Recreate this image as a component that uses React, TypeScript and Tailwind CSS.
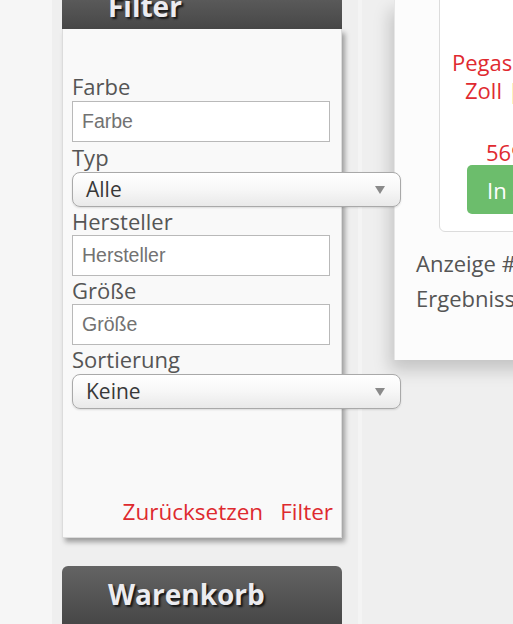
import React from "react";

const sans = { fontFamily: '"Open Sans", "Liberation Sans", sans-serif' };
const arial = { fontFamily: '"Liberation Sans", Arial, sans-serif' };

function Label({ children, h }: { children: React.ReactNode; h: string }) {
  return (
    <div className={`${h} flex items-center text-[22px] leading-[28px] text-[#555]`} style={sans}>
      {children}
    </div>
  );
}

function TextField({ placeholder }: { placeholder: string }) {
  return (
    <input
      type="text"
      placeholder={placeholder}
      className="block h-[41px] w-[258px] border border-[#b9b9b9] bg-white px-[9px] text-[19.5px] text-[#333] placeholder:text-[#727272] outline-none"
      style={arial}
    />
  );
}

function SelectBox({ value }: { value: string }) {
  return (
    <div
      className="relative flex h-[35px] w-[329px] items-center rounded-[8px] border border-[#a9a9a9] bg-gradient-to-b from-white via-[#f7f7f7] to-[#e9e9e9] pl-[13px] text-[21px] text-[#383838] shadow-[0_1px_2px_rgba(0,0,0,0.12)]"
      style={sans}
    >
      <span>{value}</span>
      <svg
        className="absolute right-[15px] top-[13px]"
        width="10"
        height="8"
        viewBox="0 0 10 8"
      >
        <path d="M0 0 H10 L5 8 Z" fill="#8a8a8a" />
      </svg>
    </div>
  );
}

function BoxHeader({ title, className }: { title: string; className: string }) {
  return (
    <div
      className={`flex items-center bg-gradient-to-b from-[#646464] to-[#474747] pl-[46px] text-[28px] font-bold text-[#ececf0] [text-shadow:2px_2px_2px_#151515] ${className}`}
      style={sans}
    >
      {title}
    </div>
  );
}

export default function App() {
  return (
    <div className="flex h-[624px] w-[513px] overflow-hidden bg-[#efefef]">
      {/* outer page margin */}
      <div className="w-[52px] shrink-0 bg-[#f6f6f6]" />
      <div className="w-[10px] shrink-0" />

      {/* sidebar */}
      <aside className="flex w-[280px] shrink-0 flex-col">
        <BoxHeader title="Filter" className="-mt-[16px] h-[45px] leading-none" />
        <div className="flex h-[511px] flex-col border-x border-b border-[#dcdcdc] bg-[#f9f9f9] pl-[9px] pt-[43px] shadow-[3px_4px_5px_rgba(0,0,0,0.35)]">
          <Label h="h-[29px]">Farbe</Label>
          <TextField placeholder="Farbe" />
          <Label h="h-[30px]">Typ</Label>
          <SelectBox value="Alle" />
          <Label h="h-[28px]">Hersteller</Label>
          <TextField placeholder="Hersteller" />
          <Label h="h-[28px]">Größe</Label>
          <TextField placeholder="Größe" />
          <Label h="h-[29px]">Sortierung</Label>
          <SelectBox value="Keine" />
          <div className="flex-1" />
          <div
            className="flex justify-end gap-[17px] pb-[11px] pr-[8px] text-[22.5px] leading-[29px] text-[#de2a2f]"
            style={sans}
          >
            <span>Zurücksetzen</span>
            <span>Filter</span>
          </div>
        </div>
        <BoxHeader title="Warenkorb" className="mt-[28px] h-[58px] rounded-t-[6px] pb-[2px]" />
      </aside>

      {/* gutter */}
      <div className="flex w-[52px] shrink-0 pl-[16px]">
        <div className="w-[4px] bg-[#f4f4f4]" />
      </div>

      {/* product listing */}
      <main className="flex h-[360px] w-[160px] shrink-0 flex-col border-l border-[#e6e6e6] bg-[#fcfcfc] shadow-[-4px_10px_16px_rgba(0,0,0,0.18)]">
        <div
          className="-mt-[8px] ml-[44px] flex h-[240px] w-[240px] shrink-0 flex-col rounded-[6px] border border-[#dcdcdc] bg-white pt-[55px] text-[22px] leading-[28px] text-[#e02a30]"
          style={sans}
        >
          <div className="whitespace-nowrap pl-[12px]">Pegasus Steppjacke</div>
          <div className="whitespace-nowrap pl-[25px]">
            Zoll <span className="text-[#e87a2e]">|</span> 75 cm
          </div>
          <div className="mt-[34px] whitespace-nowrap pl-[46px]">569,00 €</div>
          <div className="ml-[27px] -mt-[1px] flex h-[49px] w-[200px] items-center whitespace-nowrap rounded-[5px] bg-[#6cbd6c] pl-[20px] text-[22px] text-white">
            In den Warenkorb
          </div>
        </div>
        <div className="pl-[21px] pt-[14px] text-[22px] leading-[35px] text-[#555]" style={sans}>
          <div className="whitespace-nowrap">Anzeige #1 bis #1</div>
          <div className="whitespace-nowrap">Ergebnisse 1</div>
        </div>
      </main>
    </div>
  );
}
